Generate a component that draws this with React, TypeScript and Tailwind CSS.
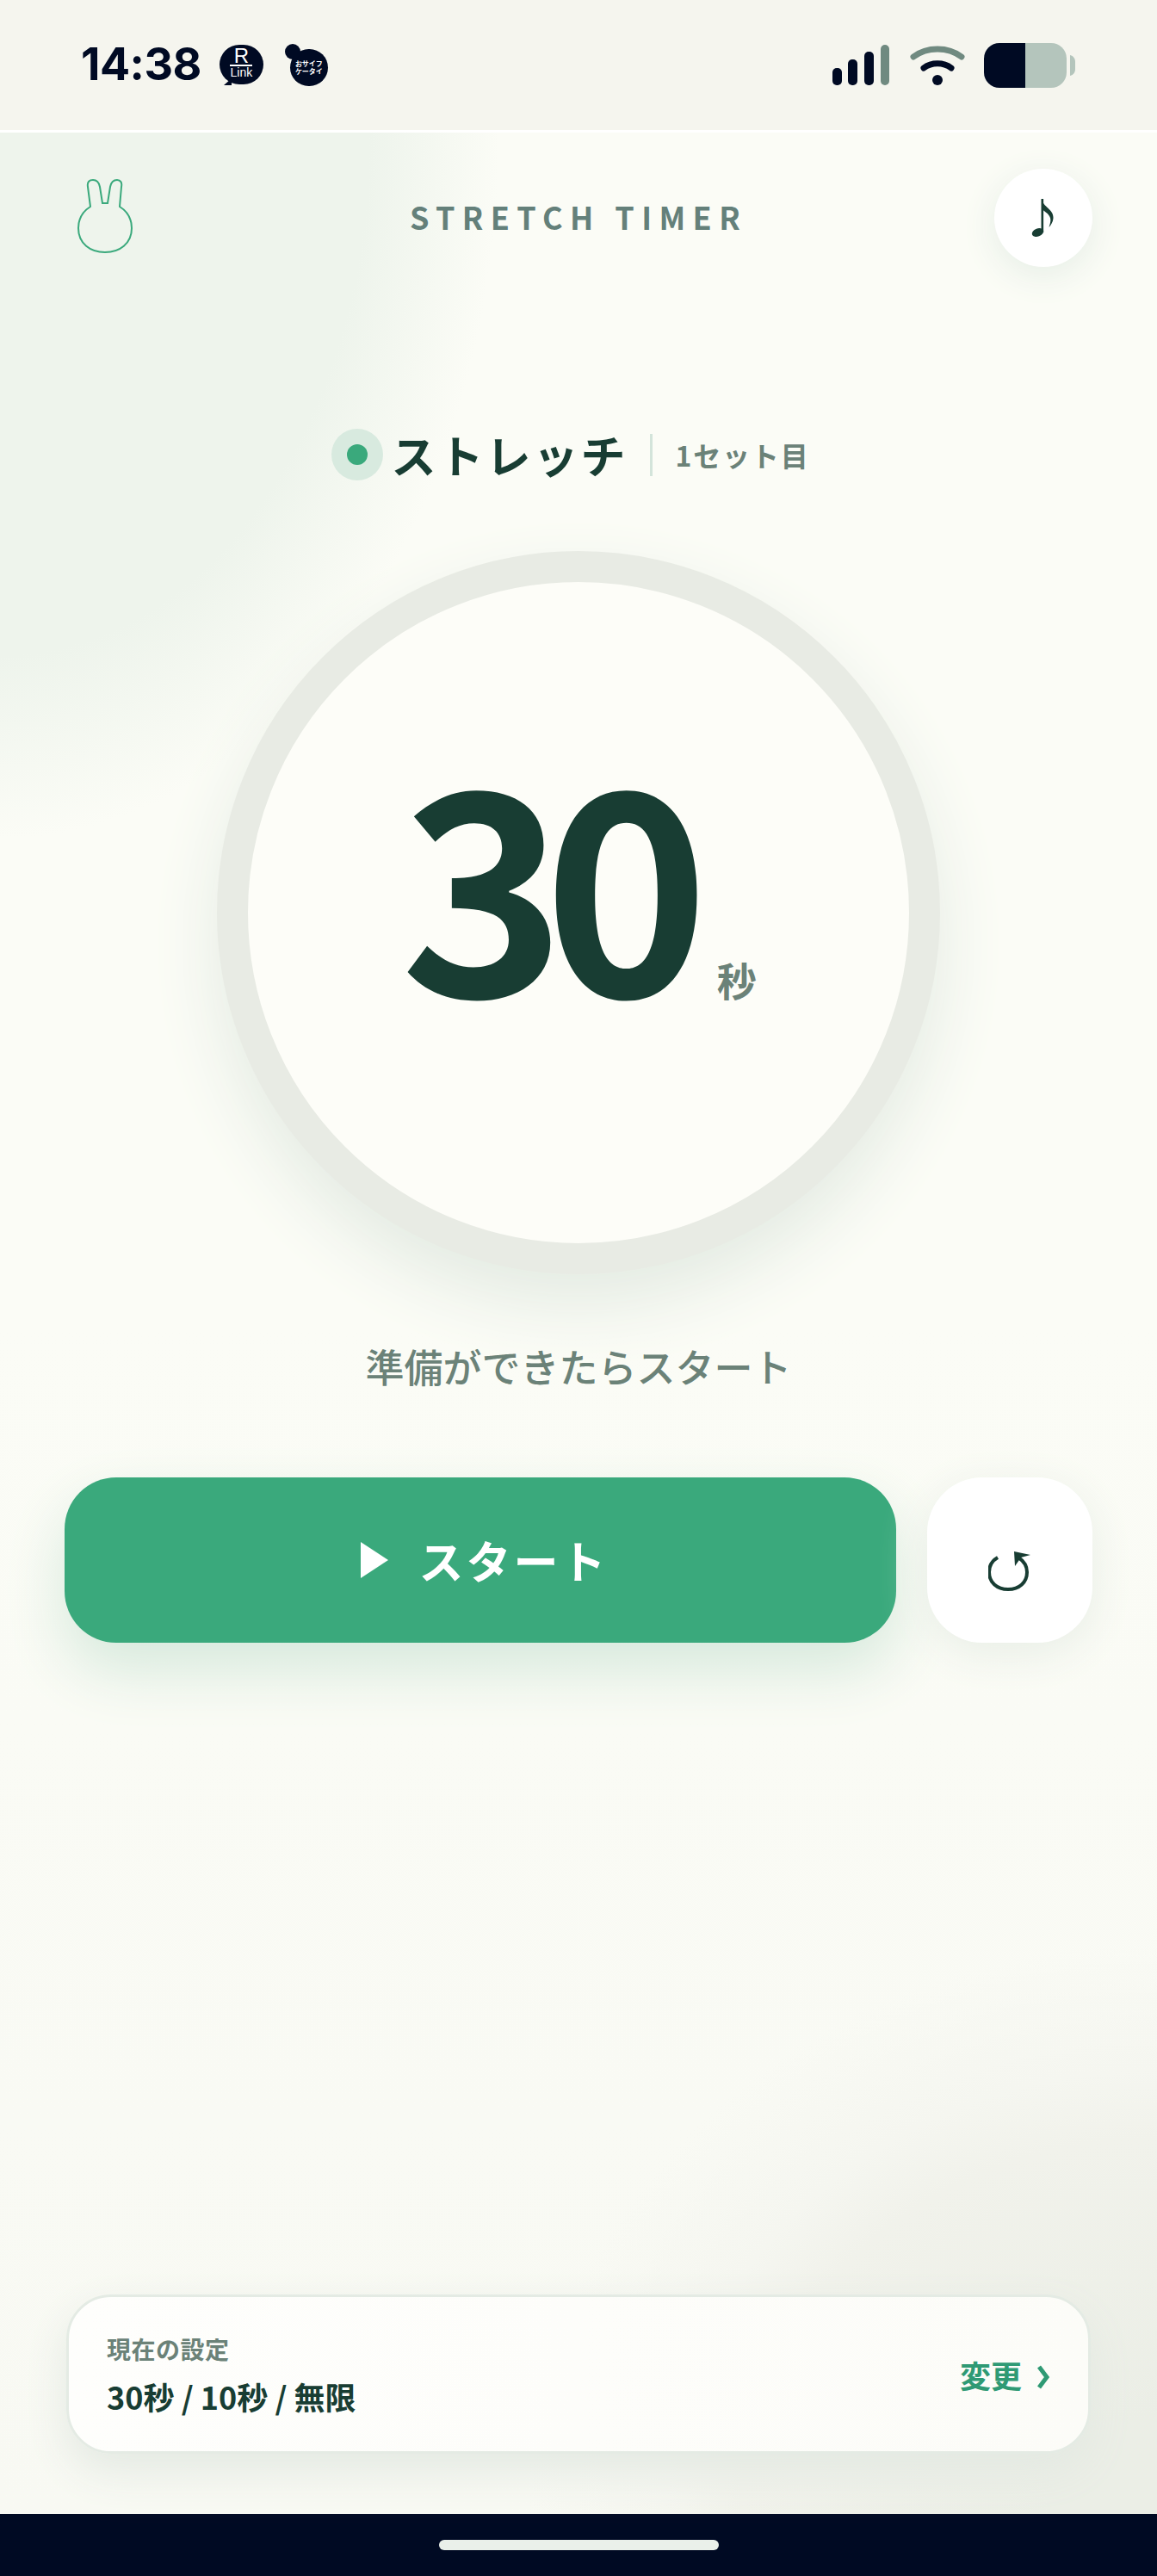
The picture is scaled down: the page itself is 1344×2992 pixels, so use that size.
const jp = "font-['Noto_Sans_CJK_JP','Noto_Sans',sans-serif]";

function SignalIcon() {
  return (
    <svg width="68" height="48" viewBox="0 0 68 48">
      <rect x="0" y="27" width="11" height="20" rx="5" fill="#000a23" />
      <rect x="18" y="17" width="11" height="30" rx="5" fill="#000a23" />
      <rect x="37" y="8" width="11" height="39" rx="5" fill="#000a23" />
      <rect x="56" y="0" width="10" height="47" rx="5" fill="#708a80" />
    </svg>
  );
}

function WifiIcon() {
  return (
    <svg width="64" height="48" viewBox="0 0 64 48" fill="none" strokeLinecap="round">
      <path d="M4 14 C20 2 44 2 60 14" stroke="#708a80" strokeWidth="7" />
      <path d="M16 27 C25 20 39 20 48 27" stroke="#000a23" strokeWidth="7" />
      <circle cx="32" cy="41" r="6" fill="#000a23" />
    </svg>
  );
}

function BatteryIcon() {
  return (
    <svg width="107" height="52" viewBox="0 0 107 52">
      <path d="M18 0 H48 V52 H18 A18 18 0 0 1 0 34 V18 A18 18 0 0 1 18 0 Z" fill="#000a23" />
      <path d="M48 0 H78 A18 18 0 0 1 96 18 V34 A18 18 0 0 1 78 52 H48 Z" fill="#b4c5bc" />
      <path d="M100 14 C104 15 106 18 106 22 V30 C106 34 104 37 100 38 Z" fill="#b4c5bc" />
    </svg>
  );
}

function RabbitIcon() {
  return (
    <svg className="-translate-y-[2px]" width="66" height="88" viewBox="0 0 66 88" fill="none" stroke="#3aa97c" strokeWidth="2">
      <path d="M16 33 L13 10 C12 4 15 2 19 2 C23 2 26 5 27 10 L30 29 H36 L39 10 C40 5 43 2 47 2 C51 2 53 5 52 10 L50 33 C58 38 64 46 64 58 C64 76 50 86 33 86 C16 86 2 76 2 58 C2 46 8 38 16 33 Z" />
    </svg>
  );
}

function NoteIcon() {
  return (
    <svg width="30" height="48" viewBox="0 0 30 48" fill="#183d33">
      <rect x="12.5" y="2" width="2.6" height="39" />
      <ellipse cx="8.5" cy="41" rx="7" ry="4.6" transform="rotate(-20 8.5 41)" />
      <path d="M13 2 C15 12 27 14 26.5 24 C26.3 29 24 32 21.5 35 C23 30 24.5 26 22 22 C20 18 16 17 14 14 Z" />
    </svg>
  );
}

function ResetIcon() {
  return (
    <svg width="50" height="48" viewBox="0 0 50 48" fill="none">
      <path d="M11 7 C4 11 1 17 1 24 C1 36 10 44 23 44 C36 44 45 36 45 24 C45 16 41 11 35 7" stroke="#183d33" strokeWidth="4" />
      <path d="M30 0 L49 4 L38 7 L31 17 Z" fill="#183d33" />
    </svg>
  );
}

export default function App() {
  return (
    <div className={`relative flex h-[2992px] w-[1344px] flex-col overflow-hidden bg-[#fbfcf6] ${jp}`}>
      {/* status bar */}
      <div className="flex h-[154px] shrink-0 items-start justify-between border-b-[3px] border-white bg-[#f5f5ee] pr-[94px] pl-[94px]">
        <div className="flex items-center pt-[50px]">
          <span className="font-['Inter',sans-serif] text-[52px] leading-[50px] font-bold tracking-[-0.5px] text-[#000a23]">14:38</span>
          <div className="relative ml-[21px] flex h-[46px] w-[51px] flex-col items-center rounded-full bg-[#000a23] pt-[2px] text-white">
            <span className="font-['Liberation_Sans',sans-serif] text-[24px] leading-[21px]">R</span>
            <span className="h-[2px] w-[26px] bg-white" />
            <span className="font-['Liberation_Sans',sans-serif] text-[14px] leading-[15px]">Link</span>
            <span className="absolute bottom-[-1px] left-[5px] h-0 w-0 border-t-[8px] border-r-[9px] border-t-transparent border-r-[#000a23]" />
          </div>
          <div className="relative ml-[31px] flex h-[43px] w-[44px] translate-y-[3px] flex-col items-center justify-center rounded-full bg-[#000a23] text-[8px] leading-[9px] font-bold text-white">
            <span className="absolute top-[-6px] left-[-6px] h-[18px] w-[18px] rounded-full bg-[#000a23]" />
            <span>おサイフ</span>
            <span>ケータイ</span>
          </div>
        </div>
        <div className="flex items-center gap-[22px] pt-[50px]">
          <SignalIcon />
          <WifiIcon />
          <BatteryIcon />
        </div>
      </div>

      {/* main */}
      <div className="relative flex flex-1 flex-col bg-[radial-gradient(ellipse_580px_820px_at_0%_0%,#eef4ec_74%,#eef4ec00_100%),linear-gradient(#fbfcf6_50%,#f8f9f3_100%)]">
        <div className="absolute right-0 bottom-0 h-[760px] w-[800px] bg-[radial-gradient(ellipse_620px_560px_at_100%_100%,#ebeee6_20%,#f1f2eb_78%,#f5f6f0_92%,#f8f9f300_118%)]" />

        <div className="relative grid grid-cols-[1fr_auto_1fr] items-center pt-[42px] pr-[75px] pl-[89px]">
          <RabbitIcon />
          <span className="-translate-x-[7px] -translate-y-[2px] text-[36px] leading-[114px] font-bold tracking-[8.4px] text-[#64807a]">STRETCH TIMER</span>
          <div className="flex justify-end">
            <div className="flex h-[114px] w-[114px] items-center justify-center rounded-full bg-white shadow-[0_10px_40px_#e6eee6]">
              <NoteIcon />
            </div>
          </div>
        </div>

        <div className="relative mt-[188px] flex h-[60px] items-center justify-center pr-[19px]">
          <div className="flex h-[60px] w-[60px] items-center justify-center rounded-full bg-[#d8eadf]">
            <div className="h-[24px] w-[24px] rounded-full bg-[#3aa97c]" />
          </div>
          <span className="ml-[10px] text-[52px] leading-none font-bold tracking-[3px] text-[#183d33]">ストレッチ</span>
          <div className="mr-[27px] ml-[25px] h-[49px] w-[3px] bg-[#d3e4da]" />
          <span className="text-[32px] leading-none font-bold tracking-[1.8px] text-[#6b8278]">1セット目</span>
        </div>

        <div className="relative mx-auto mt-[82px] flex h-[840px] w-[840px] shrink-0 items-center justify-center rounded-full border-[36px] border-[#e8ebe4] bg-[#fdfdf8] shadow-[0_36px_80px_#e4ebe3]">
          <div className="mb-[88px] flex items-end">
            <span className="text-[326px] leading-[326px] font-bold tracking-[-26px] text-[#183d33]">30</span>
            <span className="mb-[19px] ml-[35px] text-[46px] leading-none font-bold text-[#6b8278]">秒</span>
          </div>
        </div>

        <p className="relative mt-[77px] text-center text-[45px] leading-[60px] font-medium text-[#6b8278]">準備ができたらスタート</p>

        <div className="relative mt-[99px] flex gap-[36px] px-[75px]">
          <div className="flex h-[192px] flex-1 items-center justify-center rounded-[60px] bg-[#3aa97c] pl-[10px] shadow-[0_32px_70px_#d6e9dc]">
            <svg width="32" height="42" viewBox="0 0 32 42">
              <path d="M0 0 L32 21 L0 42 Z" fill="#ffffff" />
            </svg>
            <span className="ml-[35px] text-[52px] leading-none font-bold tracking-[3px] text-white">スタート</span>
          </div>
          <div className="flex h-[192px] w-[192px] items-end justify-center rounded-[64px] bg-white pb-[58px] shadow-[0_12px_50px_#e8eee6]">
            <ResetIcon />
          </div>
        </div>

        <div className="relative mx-[77px] mt-auto mb-[70px] flex h-[185px] items-center justify-between rounded-[52px] border-[3px] border-[#e4ebe4] bg-[linear-gradient(90deg,#fefefc,#fcfcf8)] px-[44px] shadow-[0_20px_50px_#e3e9e2]">
          <div className="flex flex-col">
            <span className="-translate-y-[1px] text-[28px] leading-[40px] font-bold tracking-[0.5px] text-[#6b8278]">現在の設定</span>
            <span className="mt-[10px] text-[36px] leading-[48px] font-bold text-[#183d33]">30秒 / 10秒 / 無限</span>
          </div>
          <div className="flex items-center gap-[17px]">
            <span className="text-[36px] leading-none font-bold text-[#2f9a74]">変更</span>
            <svg className="translate-y-[3px]" width="16" height="28" viewBox="0 0 16 28" fill="none">
              <path d="M3 2 L12 14 L3 26" stroke="#2f9a74" strokeWidth="5" />
            </svg>
          </div>
        </div>
      </div>

      {/* nav bar */}
      <div className="flex h-[72px] shrink-0 justify-center bg-[#000a23] pt-[30px]">
        <div className="h-[12px] w-[325px] rounded-full bg-[#eaf0ea]" />
      </div>
    </div>
  );
}
